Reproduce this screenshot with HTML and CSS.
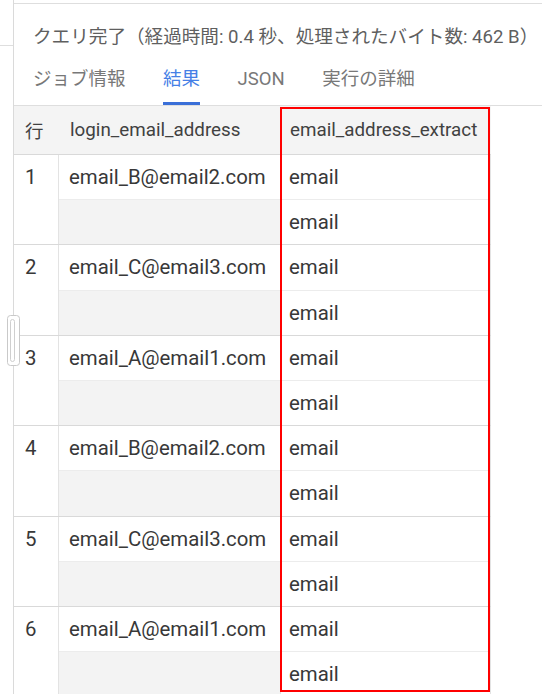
FILE: index.html
```html
<!DOCTYPE html>
<html lang="ja">
<head>
<meta charset="utf-8">
<title>クエリ結果</title>
<link rel="stylesheet" href="styles.css">
</head>
<body>
<div class="app">
  <aside class="rail"><div class="rail-head"></div></aside>
  <main class="panel">
    <p class="status">クエリ完了（経過時間: 0.4 秒、処理されたバイト数: 462 B）</p>
    <nav class="tabs">
      <span class="tab">ジョブ情報</span>
      <span class="tab active">結果</span>
      <span class="tab">JSON</span>
      <span class="tab">実行の詳細</span>
    </nav>
    <div class="results">
      <div class="thead">
        <div class="h-num">行</div>
        <div class="h-login">login_email_address</div>
        <div class="h-ext">email_address_extract</div>
      </div>
      <div class="rec">
        <div class="num">1</div>
        <div class="login"><div class="cell">email_B@email2.com</div><div class="cell blank"></div></div>
        <div class="ext"><div class="cell">email</div><div class="cell">email</div></div>
      </div>
      <div class="rec">
        <div class="num">2</div>
        <div class="login"><div class="cell">email_C@email3.com</div><div class="cell blank"></div></div>
        <div class="ext"><div class="cell">email</div><div class="cell">email</div></div>
      </div>
      <div class="rec">
        <div class="num">3</div>
        <div class="login"><div class="cell">email_A@email1.com</div><div class="cell blank"></div></div>
        <div class="ext"><div class="cell">email</div><div class="cell">email</div></div>
      </div>
      <div class="rec">
        <div class="num">4</div>
        <div class="login"><div class="cell">email_B@email2.com</div><div class="cell blank"></div></div>
        <div class="ext"><div class="cell">email</div><div class="cell">email</div></div>
      </div>
      <div class="rec">
        <div class="num">5</div>
        <div class="login"><div class="cell">email_C@email3.com</div><div class="cell blank"></div></div>
        <div class="ext"><div class="cell">email</div><div class="cell">email</div></div>
      </div>
      <div class="rec">
        <div class="num">6</div>
        <div class="login"><div class="cell">email_A@email1.com</div><div class="cell blank"></div></div>
        <div class="ext"><div class="cell">email</div><div class="cell">email</div></div>
      </div>
      <div class="highlight"></div>
    </div>
  </main>
  <div class="handle">
    <svg width="13" height="51" viewBox="0 0 13 51">
      <rect x="0.5" y="0.5" width="12" height="50" rx="3" fill="#fff" stroke="#c9c9c9"/>
      <rect x="3.5" y="4.5" width="4" height="42" rx="2" fill="#fff" stroke="#cfcfcf"/>
    </svg>
  </div>
</div>
</body>
</html>
```

FILE: styles.css
```css
html, body {
  margin: 0;
  padding: 0;
  background: #fff;
  overflow: hidden;
}

.app {
  position: relative;
  display: flex;
  width: 542px;
  height: 694px;
  font-family: Roboto, "Noto Sans CJK JP", sans-serif;
}

.rail {
  width: 13px;
  flex: none;
  border-right: 1px solid #dadada;
  background: #fff;
}

.rail-head {
  height: 45px;
  border-bottom: 1px solid #dedede;
}

.panel {
  flex: 1;
  margin-top: 3px;
  border-top: 1px solid #dedede;
  min-width: 0;
}

.status {
  margin: 0;
  padding: 21px 0 0 19px;
  line-height: 24px;
  font-size: 18.6px;
  color: #5f5f5f;
  white-space: nowrap;
}

.tabs {
  display: flex;
  gap: 37.5px;
  padding-left: 19px;
  border-bottom: 1px solid #dedede;
}

.tab {
  padding: 18px 0 11px;
  line-height: 24px;
  font-size: 18.5px;
  color: #787878;
  border-bottom: 3px solid transparent;
}

.tab.active {
  color: #4680e6;
  border-bottom-color: #3a6fd8;
}

.results {
  position: relative;
  width: 477px;
  font-size: 20.4px;
  color: #383838;
}

.thead {
  display: flex;
  height: 48px;
  align-items: center;
  background: #f4f4f4;
  border-bottom: 1px solid #d9d9d9;
  color: #414141;
  font-size: 18.8px;
}

.h-num {
  width: 45px;
  padding-left: 11px;
  box-sizing: border-box;
  font-size: 18.5px;
}

.h-login {
  width: 222px;
  padding-left: 11px;
  box-sizing: border-box;
}

.h-ext {
  width: 210px;
  padding-left: 9px;
  box-sizing: border-box;
}

.rec {
  display: flex;
  border-bottom: 1px solid #d9d9d9;
}

.num {
  width: 45px;
  box-sizing: border-box;
  padding-left: 11px;
  line-height: 44.2px;
  border-right: 1px solid #e3e3e3;
}

.login {
  width: 222px;
  box-sizing: border-box;
  border-right: 1px solid #e3e3e3;
}

.ext {
  width: 210px;
  box-sizing: border-box;
  border-right: 1px solid #e3e3e3;
}

.cell {
  height: 44.2px;
  line-height: 44.2px;
  padding-left: 10px;
  white-space: nowrap;
}

.ext .cell {
  padding-left: 8px;
}

.cell:first-child {
  border-bottom: 1px solid #ececec;
}

.cell.blank {
  background: #f3f3f3;
}

.highlight {
  position: absolute;
  left: 266px;
  top: 1px;
  width: 210px;
  height: 585px;
  box-sizing: border-box;
  border: 2px solid #f00;
  pointer-events: none;
}

.handle {
  position: absolute;
  left: 7px;
  top: 315px;
  width: 13px;
  height: 51px;
}

.handle svg {
  display: block;
}
```
